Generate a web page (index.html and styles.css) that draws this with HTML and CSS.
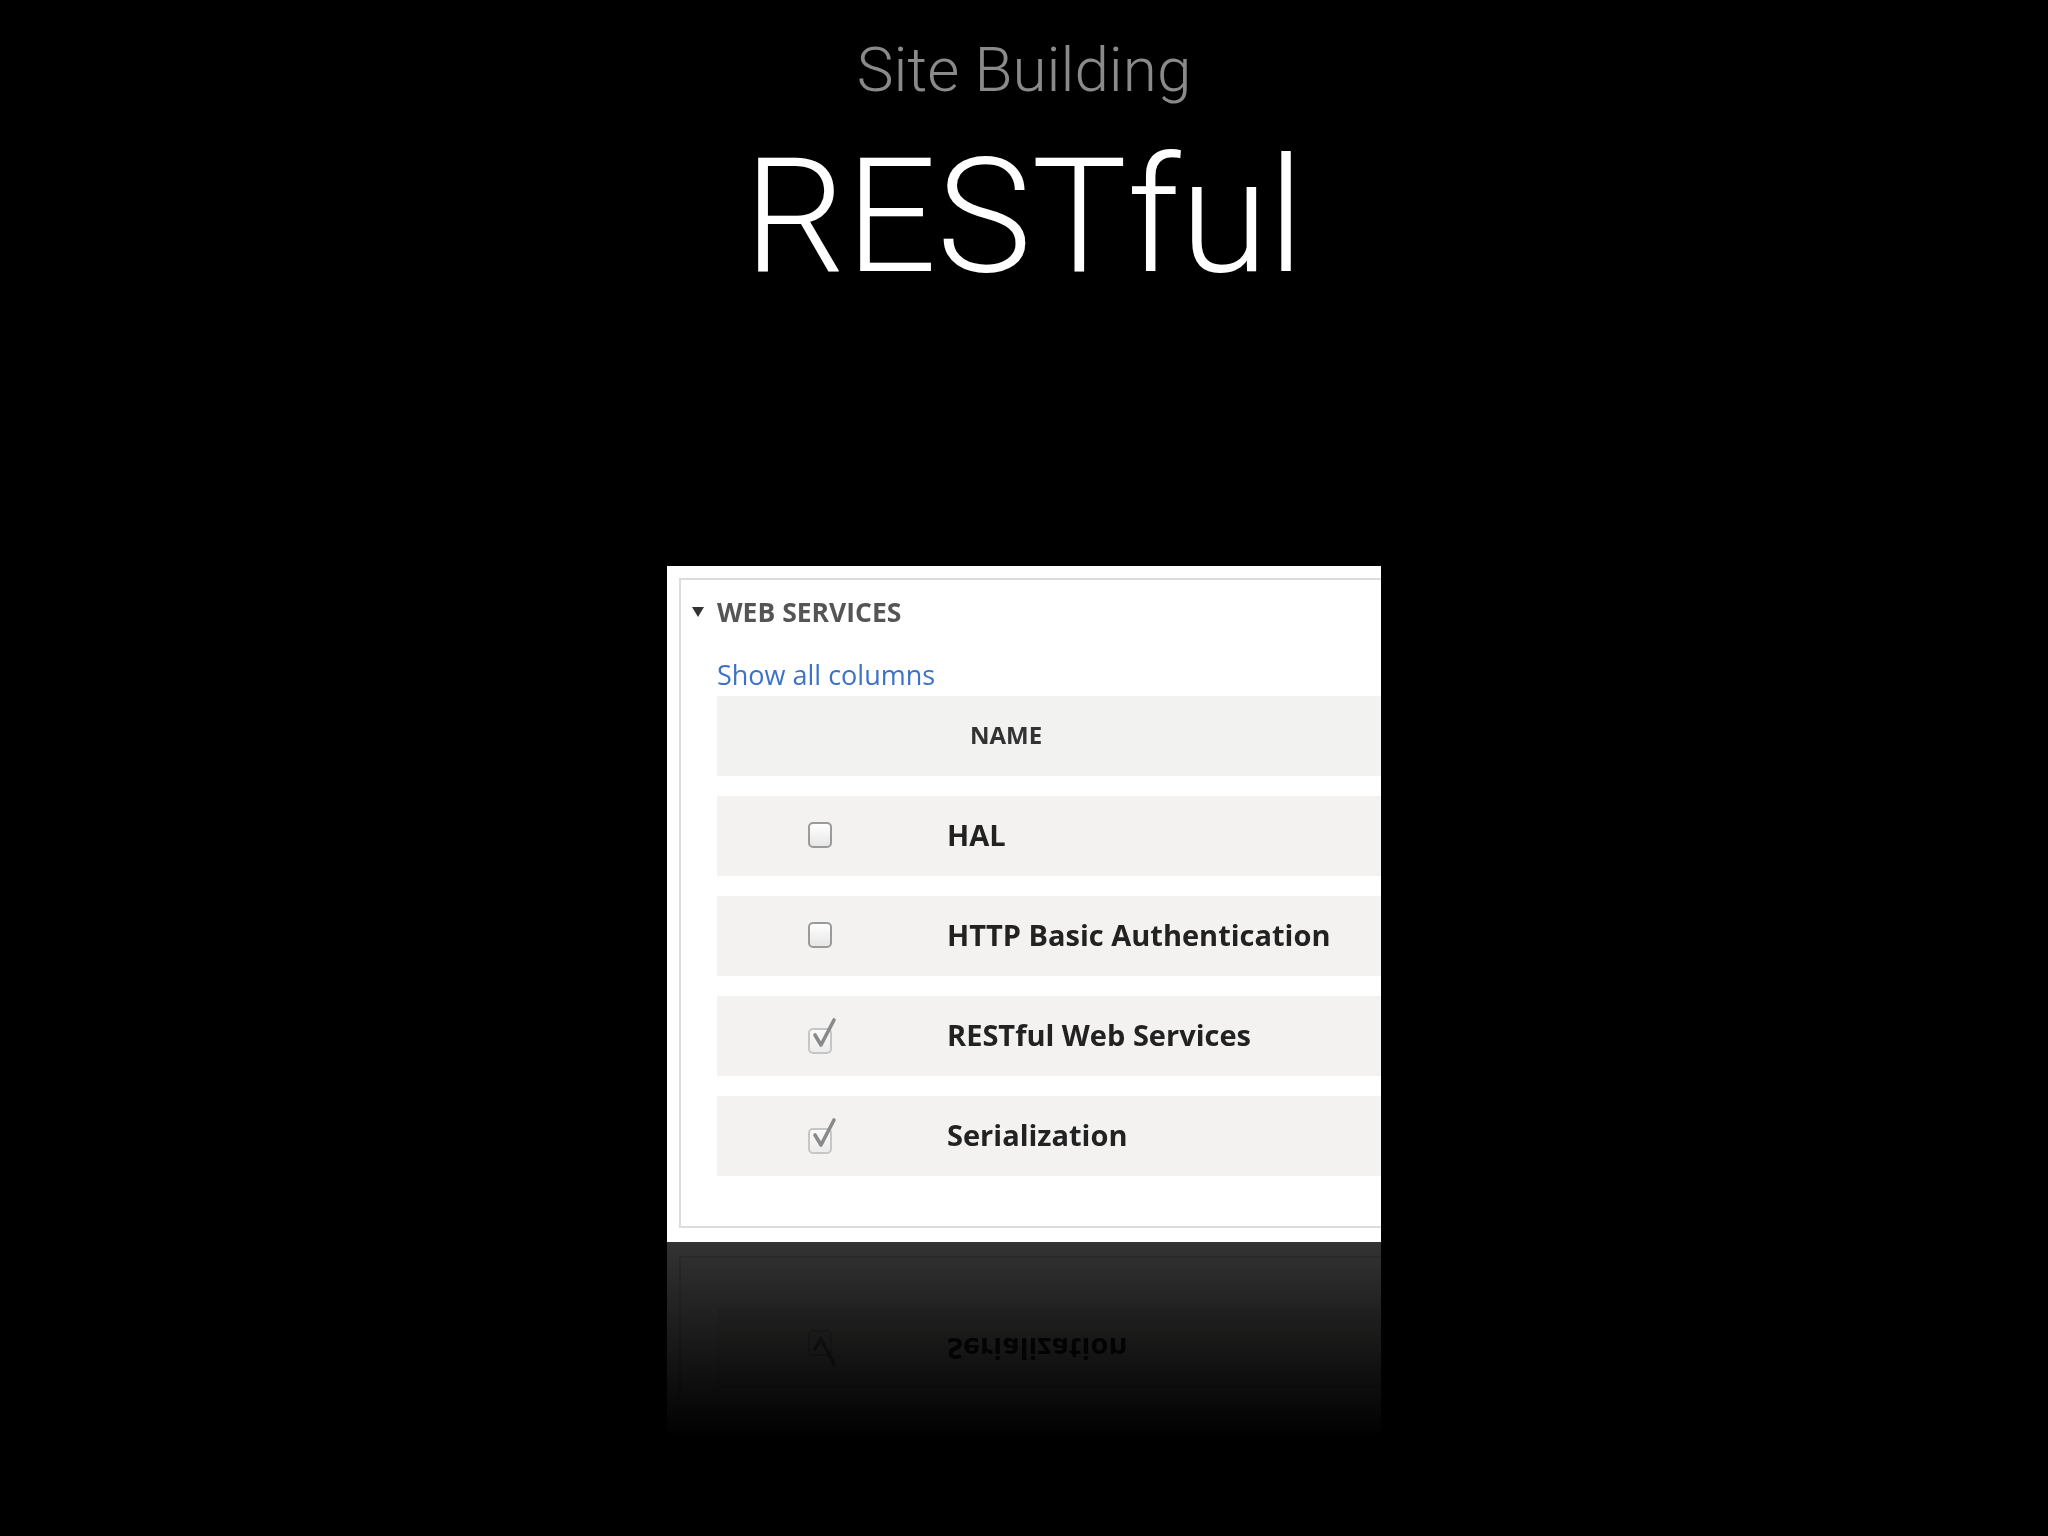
FILE: index.html
```html
<!DOCTYPE html>
<html lang="en">
<head>
<meta charset="utf-8">
<title>Site Building – RESTful</title>
<link rel="stylesheet" href="styles.css">
</head>
<body>
<main class="slide">
  <h2 class="subtitle">Site Building</h2>
  <h1 class="title">RESTful</h1>
  <section class="shot">
    <div class="fieldset">
      <div class="legend"><span class="tri"></span><span class="legend-text">WEB SERVICES</span></div>
      <a class="link">Show all columns</a>
      <div class="table">
        <div class="row head"><span class="head-name">NAME</span></div>
        <div class="row">
          <span class="cb-col"><span class="cb"></span></span>
          <span class="name">HAL</span>
        </div>
        <div class="row">
          <span class="cb-col"><span class="cb"></span></span>
          <span class="name">HTTP Basic Authentication</span>
        </div>
        <div class="row">
          <span class="cb-col"><span class="cb checked"><svg class="tick" width="34" height="34" viewBox="0 0 34 34"><path d="M7 19 L13 29 L26 4" fill="none" stroke="#8a8a8a" stroke-width="3.6" stroke-linecap="round" stroke-linejoin="round"/></svg></span></span>
          <span class="name">RESTful Web Services</span>
        </div>
        <div class="row">
          <span class="cb-col"><span class="cb checked"><svg class="tick" width="34" height="34" viewBox="0 0 34 34"><path d="M7 19 L13 29 L26 4" fill="none" stroke="#8a8a8a" stroke-width="3.6" stroke-linecap="round" stroke-linejoin="round"/></svg></span></span>
          <span class="name">Serialization</span>
        </div>
      </div>
    </div>
  </section>
</main>
</body>
</html>
```
FILE: styles.css
```css
html, body {
  margin: 0;
  padding: 0;
  background: #000;
}
body {
  width: 2048px;
  height: 1536px;
  overflow: hidden;
}
.slide {
  display: flex;
  flex-direction: column;
  align-items: center;
}
.subtitle {
  margin: 35px 0 0 0;
  font-family: Roboto, "Liberation Sans", sans-serif;
  font-weight: 300;
  font-size: 62px;
  line-height: 70px;
  color: #8a8a8a;
}
.title {
  margin: 22px 0 0 0;
  font-family: Roboto, "Liberation Sans", sans-serif;
  font-weight: 300;
  font-size: 160px;
  line-height: 180px;
  color: #fff;
}
.shot {
  margin-top: 259px;
  width: 714px;
  box-sizing: border-box;
  padding: 12px 0 14px 12px;
  background: #fff;
  overflow: hidden;
  -webkit-box-reflect: below 0 linear-gradient(to bottom, transparent 0%, transparent 71%, rgba(255,255,255,0.2) 100%);
  font-family: "Open Sans", "DejaVu Sans", sans-serif;
}
.fieldset {
  width: 820px;
  border: 2px solid #dcdcdc;
  border-right: none;
  padding: 12px 0 50px 36px;
}
.legend {
  display: flex;
  align-items: center;
  height: 40px;
  margin-left: -25px;
}
.tri {
  width: 0;
  height: 0;
  border-left: 6px solid transparent;
  border-right: 6px solid transparent;
  border-top: 10px solid #333;
  margin-right: 13px;
}
.legend-text {
  font-size: 26.5px;
  line-height: 40px;
  font-weight: 700;
  color: #555;
}
.link {
  display: block;
  margin-top: 25px;
  font-size: 27px;
  line-height: 36px;
  color: #3d72c6;
}
.table {
  margin-top: 3px;
  display: flex;
  flex-direction: column;
  gap: 20px;
}
.row {
  display: flex;
  align-items: center;
  height: 80px;
  background: #f3f2f0;
}
.head {
  background: #f2f2f1;
}
.head-name {
  padding-left: 253px;
  padding-bottom: 4px;
  font-size: 24px;
  font-weight: 700;
  color: #333;
}
.cb-col {
  width: 230px;
  display: flex;
  align-items: center;
}
.cb {
  position: relative;
  margin-left: 91px;
  margin-bottom: 2px;
  width: 20px;
  height: 22px;
  border: 2px solid #9a9a9a;
  border-radius: 5px;
  background: linear-gradient(#ffffff, #e6e6e6);
}
.cb.checked {
  margin-top: 12px;
  border-color: #c6c6c6;
  background: linear-gradient(#fafafa, #ececec);
}
.tick {
  position: absolute;
  left: -2px;
  top: -14px;
  overflow: visible;
}
.name {
  padding-bottom: 4px;
  font-size: 29px;
  font-weight: 700;
  color: #222;
}
```
